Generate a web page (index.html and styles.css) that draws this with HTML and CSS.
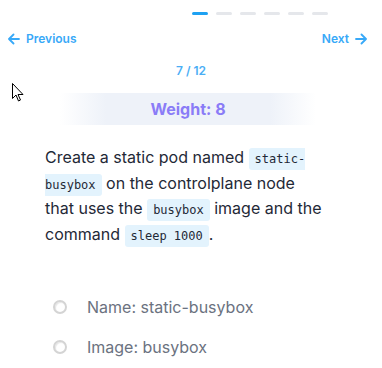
FILE: index.html
```html
<!DOCTYPE html>
<html lang="en">
<head>
  <meta charset="UTF-8" />
  <meta name="viewport" content="width=device-width, initial-scale=1.0"/>
  <title>Question 7 / 12</title>
  <link rel="stylesheet" href="styles.css">
</head>
<body>

  <div class="progress">
    <span class="step active"></span>
    <span class="step"></span>
    <span class="step"></span>
    <span class="step"></span>
    <span class="step"></span>
    <span class="step"></span>
  </div>

  <div class="nav">
    <a class="nav-link" href="#">
      <svg width="12" height="12" viewBox="0 0 12 12" fill="none" stroke="currentColor" stroke-width="1.8" stroke-linecap="round" stroke-linejoin="round"><path d="M11 6H1.5M5.5 1.5L1 6l4.5 4.5"/></svg>
      Previous
    </a>
    <a class="nav-link" href="#">
      Next
      <svg width="12" height="12" viewBox="0 0 12 12" fill="none" stroke="currentColor" stroke-width="1.8" stroke-linecap="round" stroke-linejoin="round"><path d="M1 6h9.5M6.5 1.5L11 6l-4.5 4.5"/></svg>
    </a>
  </div>

  <div class="counter">7 / 12</div>

  <div class="weight">Weight: 8</div>

  <p class="question">
    Create a static pod named <code>static-busybox</code> on the controlplane node
    that uses the <code>busybox</code> image and the command <code>sleep 1000</code>.
  </p>

  <ul class="options">
    <li><span class="radio"></span>Name: static-busybox</li>
    <li><span class="radio"></span>Image: busybox</li>
  </ul>

  <!-- mouse pointer in the capture -->
  <svg class="cursor" width="12" height="19" viewBox="0 0 12 19"><path d="M0.5 0.5v15l3.5-3.5 2.5 6 2-1-2.5-5.5h5z" fill="#fff" stroke="#000" stroke-width="1"/></svg>

</body>
</html>
```

FILE: styles.css
```css
* {
  box-sizing: border-box;
}

body {
  margin: 0;
  font-family: Inter, 'Noto Sans', sans-serif;
  background: #ffffff;
  color: #1f2937;
  position: relative;
}

.progress {
  display: flex;
  justify-content: flex-end;
  gap: 8px;
  padding: 12px 54px 0 0;
}

.step {
  width: 16px;
  height: 3px;
  border-radius: 2px;
  background: #e5e7eb;
}

.step.active {
  background: #1ea1f2;
}

.nav {
  display: flex;
  justify-content: space-between;
  padding: 16px 15px 0 8px;
}

.nav-link {
  display: flex;
  align-items: center;
  gap: 6px;
  color: #38a9f8;
  font-size: 12px;
  font-weight: 600;
  text-decoration: none;
}

.counter {
  text-align: center;
  margin-top: 17px;
  font-size: 12px;
  font-weight: 600;
  color: #4aaef5;
}

.weight {
  margin: 15px 66px 0 60px;
  height: 32px;
  line-height: 32px;
  text-align: center;
  font-size: 16px;
  font-weight: 700;
  color: #8a7cf7;
  background: linear-gradient(90deg, rgba(238, 242, 249, 0) 0%, #eef2f9 18%, #eef2f9 82%, rgba(238, 242, 249, 0) 100%);
}

.question {
  margin: 20px 56px 0 45px;
  font-size: 16px;
  line-height: 25.5px;
  color: #1f2937;
}

.question code {
  font-family: 'DejaVu Sans Mono', 'Liberation Mono', monospace;
  font-size: 12px;
  line-height: 1;
  background: #e3f3fd;
  padding: 4px 6px;
  border-radius: 3px;
  color: #1f2937;
}

.options {
  list-style: none;
  margin: 40px 0 0 0;
  padding: 0 0 0 53px;
}

.options li {
  display: flex;
  align-items: center;
  gap: 20px;
  height: 40px;
  font-size: 16px;
  color: #6b7280;
}

.radio {
  width: 14px;
  height: 14px;
  border-radius: 50%;
  border: 2px solid #d4d4d4;
  box-shadow: inset 1px 1px 1px rgba(0, 0, 0, 0.1);
}

.cursor {
  position: absolute;
  left: 12px;
  top: 83px;
}
```
